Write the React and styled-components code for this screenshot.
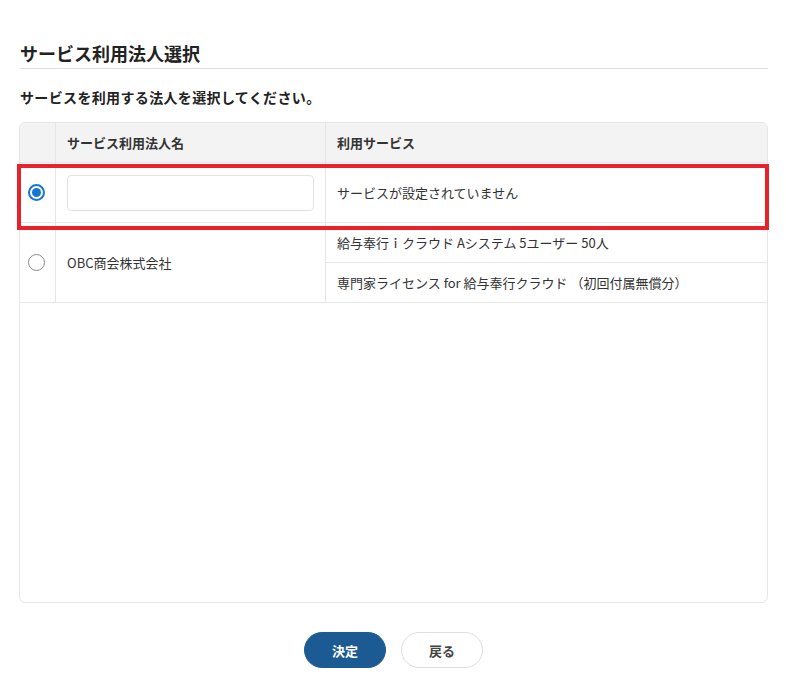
import React from "react";
import styled, { createGlobalStyle } from "styled-components";

const Global = createGlobalStyle`
  html, body { margin: 0; padding: 0; background: #fff; }
  body { font-family: "Noto Sans CJK JP", "Noto Sans", sans-serif; color: #333; }
  * { box-sizing: border-box; }
`;

const Page = styled.div`
  padding: 40px 18px 10px 19px;
  display: flex;
  flex-direction: column;
`;

const Title = styled.h1`
  margin: 0 0 0 1px;
  font-size: 18px;
  font-weight: 700;
  color: #222;
  line-height: 26px;
  padding-bottom: 2px;
  border-bottom: 1px solid #dcdcdc;
`;

const Lead = styled.p`
  margin: 18px 0 0 1px;
  font-size: 14px;
  font-weight: 700;
  letter-spacing: 0.35px;
  color: #222;
  line-height: 20px;
`;

const TableWrap = styled.div`
  position: relative;
  margin-top: 15px;
`;

const Table = styled.div`
  border: 1px solid #e6e6e6;
  border-radius: 6px;
  height: 481px;
  overflow: hidden;
  display: flex;
  flex-direction: column;
`;

const Row = styled.div`
  display: grid;
  grid-template-columns: 36px 270px 1fr;
  border-bottom: 1px solid #e6e6e6;
  background: ${(p) => (p.$head ? "#f3f3f3" : "#fff")};
  min-height: ${(p) => p.$h}px;
`;

const Cell = styled.div`
  display: flex;
  align-items: center;
  justify-content: ${(p) => (p.$center ? "center" : "flex-start")};
  padding: ${(p) => (p.$center ? "0 2px 0 0" : "0 11px 0 11px")};
  border-right: ${(p) => (p.$last ? "none" : "1px solid #e6e6e6")};
  font-size: 13px;
  font-weight: ${(p) => (p.$head ? 700 : 400)};
  color: #333;
`;

const Stack = styled.div`
  display: flex;
  flex-direction: column;
`;

const SubCell = styled.div`
  height: ${(p) => (p.$last ? 39 : 40)}px;
  display: flex;
  align-items: center;
  padding: 0 11px;
  font-size: 13px;
  color: #333;
  border-bottom: ${(p) => (p.$last ? "none" : "1px solid #e6e6e6")};
`;

const Radio = styled.span`
  width: 17px;
  height: 17px;
  border-radius: 50%;
  border: ${(p) => (p.$checked ? "2px solid #1677d2" : "1.5px solid #8a8a8a")};
  display: flex;
  align-items: center;
  justify-content: center;
  background: #fff;
  &::after {
    content: "";
    display: ${(p) => (p.$checked ? "block" : "none")};
    width: 9px;
    height: 9px;
    border-radius: 50%;
    background: #1677d2;
  }
`;

const Input = styled.input`
  width: 100%;
  height: 36px;
  border: 1px solid #e2e2e2;
  border-radius: 4px;
  background: #fff;
  font-family: inherit;
  font-size: 13px;
  padding: 0 10px;
  outline: none;
`;

const Highlight = styled.div`
  position: absolute;
  left: -2px;
  top: 42px;
  width: 752px;
  height: 66px;
  border: 4px solid #e8212a;
  pointer-events: none;
`;

const Buttons = styled.div`
  display: flex;
  justify-content: center;
  gap: 15px;
  margin-top: 29px;
`;

const Button = styled.button`
  width: 82px;
  height: 36px;
  border-radius: 18px;
  font-family: inherit;
  font-size: 13px;
  font-weight: 700;
  cursor: pointer;
  background: ${(p) => (p.$primary ? "#1b5a93" : "#fff")};
  color: ${(p) => (p.$primary ? "#fff" : "#444")};
  border: ${(p) => (p.$primary ? "1px solid #1b5a93" : "1px solid #dedede")};
`;

export default function App() {
  return (
    <>
      <Global />
      <Page>
        <Title>サービス利用法人選択</Title>
        <Lead>サービスを利用する法人を選択してください。</Lead>
        <TableWrap>
          <Table>
            <Row $head $h={40}>
              <Cell $center />
              <Cell $head>サービス利用法人名</Cell>
              <Cell $head $last>利用サービス</Cell>
            </Row>
            <Row $h={60}>
              <Cell $center>
                <Radio $checked />
              </Cell>
              <Cell>
                <Input />
              </Cell>
              <Cell $last>サービスが設定されていません</Cell>
            </Row>
            <Row $h={80}>
              <Cell $center>
                <Radio />
              </Cell>
              <Cell>OBC商会株式会社</Cell>
              <Stack>
                <SubCell>給与奉行ｉクラウド Aシステム 5ユーザー 50人</SubCell>
                <SubCell $last>専門家ライセンス for 給与奉行クラウド （初回付属無償分）</SubCell>
              </Stack>
            </Row>
          </Table>
          <Highlight />
        </TableWrap>
        <Buttons>
          <Button $primary>決定</Button>
          <Button>戻る</Button>
        </Buttons>
      </Page>
    </>
  );
}
